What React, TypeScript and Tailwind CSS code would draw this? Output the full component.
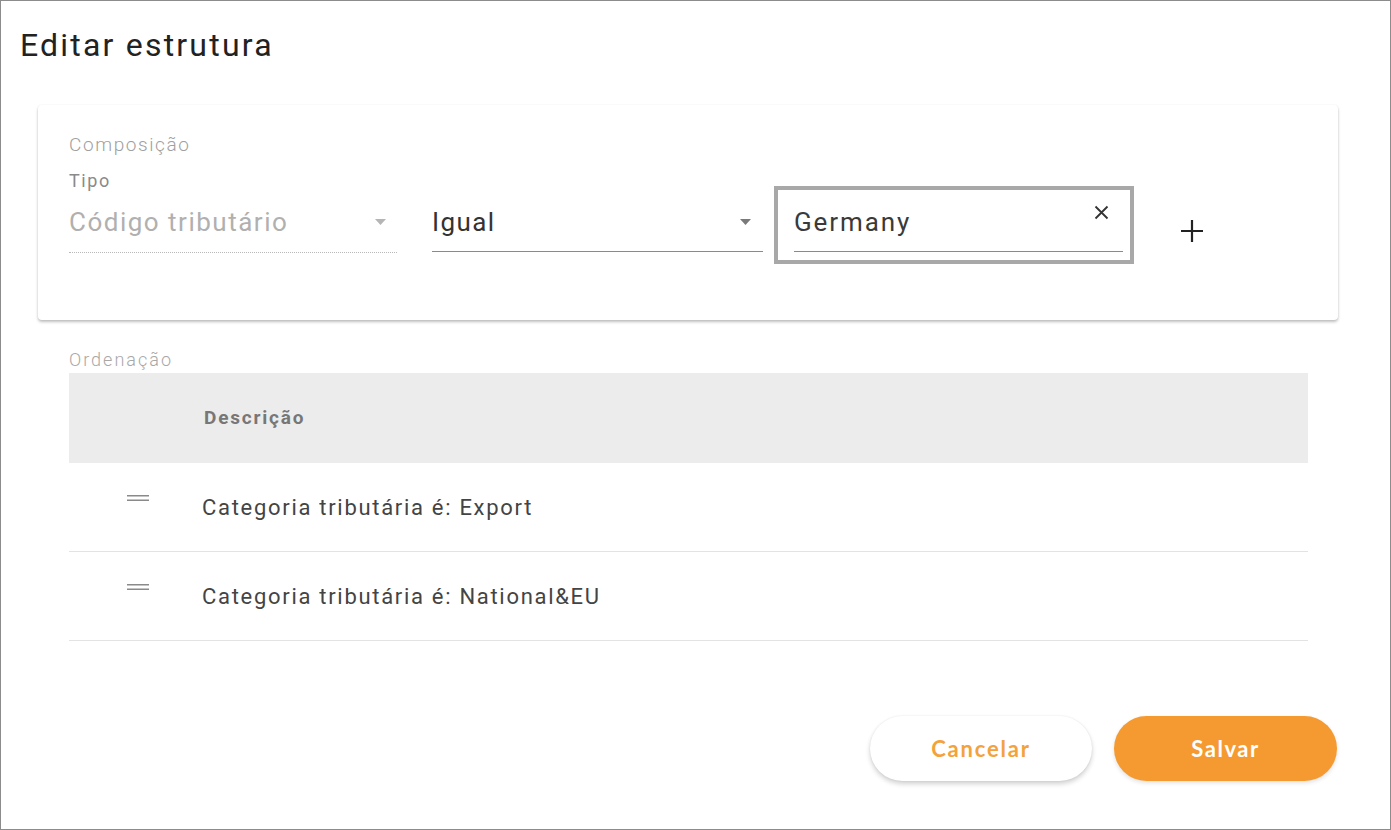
import React from "react";

const roboto = { fontFamily: "Roboto, 'Noto Sans', sans-serif" };

function Caret({ color }: { color: string }) {
  return (
    <svg width="11" height="6" viewBox="0 0 11 6" className="shrink-0">
      <path d="M0 0 L11 0 L5.5 6 Z" fill={color} />
    </svg>
  );
}

function DragHandle() {
  return (
    <svg width="22" height="8" viewBox="0 0 22 8" className="shrink-0">
      <rect x="0" y="1" width="22" height="1.5" fill="#8a8a8a" />
      <rect x="0" y="5.5" width="22" height="1.5" fill="#8a8a8a" />
    </svg>
  );
}

const rows = ["Categoria tributária é: Export", "Categoria tributária é: National&EU"];

export default function App() {
  return (
    <div
      className="w-[1391px] h-[830px] border border-[#8c8c8c] bg-white flex flex-col overflow-hidden"
      style={roboto}
    >
      <h1 className="pl-[19px] pt-[24px] text-[32px] leading-[40px] tracking-[2.2px] text-[#222]">Editar estrutura</h1>

      {/* Composição card */}
      <div className="ml-[37px] mt-[40px] w-[1300px] h-[215px] rounded-[4px] bg-white shadow-[0_2px_3px_rgba(0,0,0,0.25),0_0_2px_rgba(0,0,0,0.06)] pl-[31px] pt-[30px]">
        <div className="text-[19px] leading-[20px] font-light tracking-[1.6px] text-[#a0a0a0]">Composição</div>
        <div className="flex items-start mt-[16px]">
          <div className="flex flex-col w-[328px]">
            <div className="text-[18px] leading-[20px] tracking-[1.6px] text-[#8a8a8a]">Tipo</div>
            <div className="mt-[15px] flex items-center justify-between pr-[11px] h-[32px]">
              <span className="text-[26px] tracking-[1.5px] text-[#b0b0b0]">Código tributário</span>
              <Caret color="#b5b5b5" />
            </div>
            <div className="mt-[14px] border-b border-dotted border-[#b8b8b8]" />
          </div>

          <div className="flex flex-col w-[331px] ml-[35px] mt-[35px]">
            <div className="flex items-center justify-between pr-[12px] h-[32px]">
              <span className="text-[26px] tracking-[1.4px] text-[#333]">Igual</span>
              <Caret color="#7a7a7a" />
            </div>
            <div className="mt-[13px] border-b border-[#8a8a8a]" />
          </div>

          <div className="ml-[11px] mt-[15px] w-[360px] h-[78px] border-[4px] border-[#a8a8a8] pl-[16px] pr-[7px] pt-[16px]">
            <div className="flex items-start justify-between h-[32px]">
              <span className="text-[26px] tracking-[1.9px] text-[#3a3a3a] leading-[32px]">Germany</span>
              <svg width="15" height="15" viewBox="0 0 15 15" className="mt-[-1px] mr-[14px]">
                <path d="M1.5 1.5 L13.5 13.5 M13.5 1.5 L1.5 13.5" stroke="#333" strokeWidth="1.8" />
              </svg>
            </div>
            <div className="mt-[13px] border-b border-[#8a8a8a]" />
          </div>

          <svg width="24" height="24" viewBox="0 0 24 24" className="ml-[46px] mt-[48px]">
            <path d="M12 1 V23 M1 12 H23" stroke="#222" strokeWidth="2.2" />
          </svg>
        </div>
      </div>

      {/* Ordenação */}
      <div className="ml-[68px] mt-[30px] w-[1239px]">
        <div className="text-[18px] leading-[20px] font-light tracking-[2px] text-[#a8a8a8]">Ordenação</div>
        <div className="mt-[3px] h-[90px] bg-[#ececec] flex items-center pl-[135px]">
          <span className="text-[19px] font-bold tracking-[1.8px] text-[#777]">Descrição</span>
        </div>
        {rows.map((r) => (
          <div key={r} className="h-[89px] border-b border-[#e3e3e3] flex items-center">
            <div className="w-[58px] ml-[58px] -mt-[18px]">
              <DragHandle />
            </div>
            <span className="ml-[17px] text-[22px] tracking-[1.7px] text-[#444]">{r}</span>
          </div>
        ))}
      </div>

      {/* Buttons */}
      <div className="mt-[75px] flex justify-end gap-[22px] pr-[53px]" style={{ fontFamily: "Lato, sans-serif" }}>
        <button className="w-[222px] h-[65px] rounded-full bg-white shadow-[0_3px_5px_rgba(0,0,0,0.18),0_0_2px_rgba(0,0,0,0.08)] text-[22px] font-bold tracking-[1.8px] text-[#f3a23c]">
          Cancelar
        </button>
        <button className="w-[223px] h-[65px] rounded-full bg-[#f59a30] shadow-[0_2px_4px_rgba(0,0,0,0.12)] text-[22px] font-bold tracking-[1.5px] text-white">
          Salvar
        </button>
      </div>
    </div>
  );
}
